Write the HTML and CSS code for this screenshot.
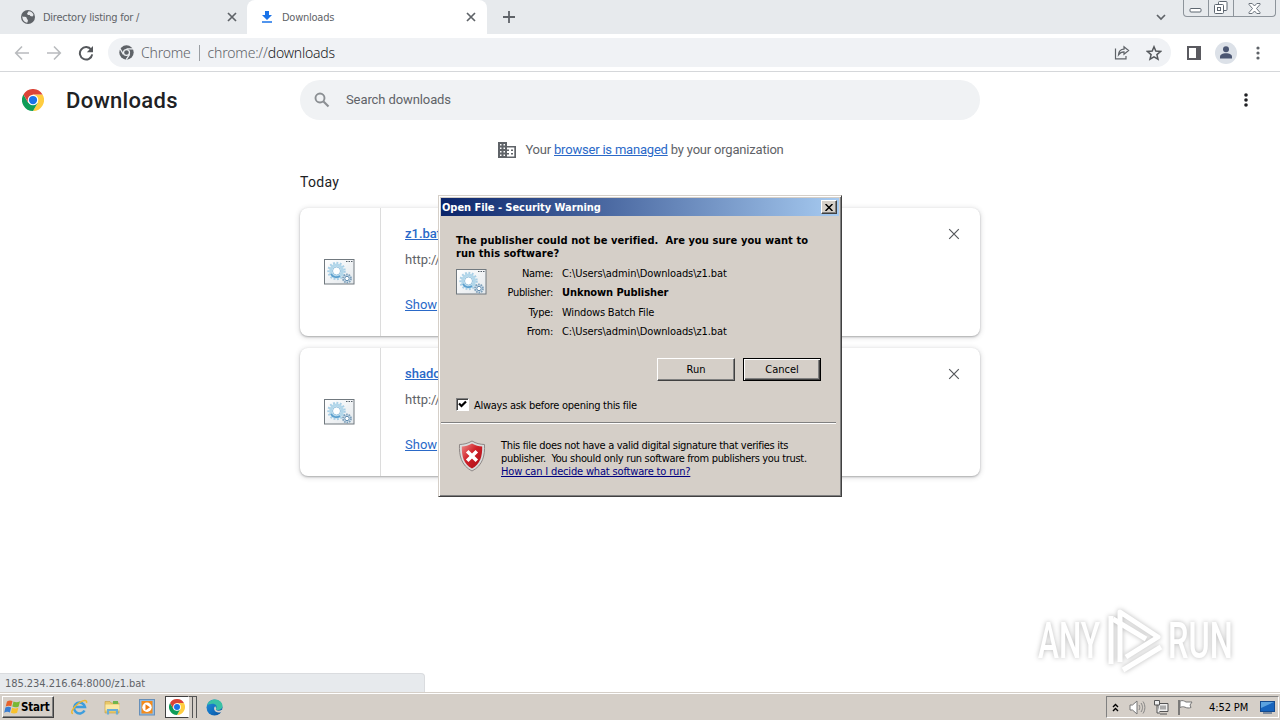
FILE: index.html
```html
<!DOCTYPE html>
<html lang="en">
<head>
    <meta charset="UTF-8">
    <meta name="viewport" content="width=device-width, initial-scale=1.0">
    <title>Downloads</title>
    <link rel="stylesheet" href="styles.css">
</head>
<body>
    <!-- shared icons -->
    <svg class="defs" width="0" height="0">
        <defs>
            <linearGradient id="paper" x1="0" y1="0" x2="1" y2="1">
                <stop offset="0" stop-color="#ffffff"/>
                <stop offset="1" stop-color="#e3e8ec"/>
            </linearGradient>
            <linearGradient id="red" x1="0" y1="0" x2="1" y2="1">
                <stop offset="0" stop-color="#ee8d8b"/>
                <stop offset="0.45" stop-color="#cf2027"/>
                <stop offset="1" stop-color="#a90e18"/>
            </linearGradient>
            <linearGradient id="edge" x1="0" y1="0" x2="1" y2="1">
                <stop offset="0" stop-color="#2a8fd6"/>
                <stop offset="0.5" stop-color="#1273c4"/>
                <stop offset="1" stop-color="#0b4f9c"/>
            </linearGradient>
        </defs>
        <symbol id="chrome" viewBox="0 0 48 48">
            <path fill="#ffcd40" d="M24 12h20.8A24 24 0 0 1 24 48l10.4-18z"/>
            <path fill="#0f9d58" d="M3.2 12A24 24 0 0 0 24 48l10.4-18L24 34.5 13.6 30z"/>
            <path fill="#db4437" d="M3.2 12 13.6 30 24 12h20.8A24 24 0 0 0 3.2 12z"/>
            <circle cx="24" cy="24" r="11.6" fill="#fff"/>
            <circle cx="24" cy="24" r="9" fill="#1a73e8"/>
        </symbol>
        <symbol id="batch" viewBox="0 0 32 26">
            <rect x="0.5" y="0.5" width="29.5" height="24.5" fill="url(#paper)" stroke="#71797f"/>
            <path d="M22 2.5h7" stroke="#56606a" stroke-dasharray="1.5 1"/>
            <circle cx="12.5" cy="12" r="8" fill="none" stroke="#a9cfe6" stroke-width="2.4" stroke-dasharray="1.8 1.6"/>
            <circle cx="12.5" cy="12" r="6" fill="#eaf5fb" stroke="#b3d7ea" stroke-width="2.8"/>
            <path d="M7 15a6.2 6.2 0 0 0 9 2" fill="none" stroke="#5c9fce" stroke-width="1.6"/>
            <circle cx="12.5" cy="12" r="4" fill="#fff" stroke="#7db2d4" stroke-width="0.8"/>
            <circle cx="23" cy="19.5" r="4" fill="#d9e8f2" stroke="#7d9fba" stroke-width="1.8" stroke-dasharray="1.6 0.9"/>
            <circle cx="23" cy="19.5" r="2.2" fill="#fff" stroke="#5f8bb0"/>
        </symbol>
        <symbol id="cross" viewBox="0 0 10 10">
            <path d="M1 1l8 8M9 1l-8 8" fill="none" stroke="currentColor"/>
        </symbol>
    </svg>

    <div class="tabs">
        <div class="tab">
            <svg class="tab-icon" width="16" height="16" viewBox="0 0 16 16">
                <circle cx="8" cy="8" r="7" fill="#5f6368"/>
                <path fill="#e7e9ec" d="M2.3 7.2c1.2 1 2.4.3 3.6.8 1.6.9.5 2 1.6 2.6.8.6.4 2-.3 3.1C4.3 13.5 2.3 10.5 2.3 7.2zM8.5 2.2c2.3-.1 4.5 1.5 5.1 3.8l-1.2 1.4-2.1-.3-.6-1.2-1.7.2-1-1.3z"/>
            </svg>
            <span class="tab-title">Directory listing for /</span>
            <svg class="tab-close" width="10" height="10"><use href="#cross"/></svg>
        </div>
        <div class="tab active">
            <svg class="tab-icon" width="16" height="16" viewBox="0 0 16 16">
                <path fill="#1a73e8" d="M6 2h4v4h3l-5 5-5-5h3zM3 12.3h10v1.5H3z"/>
            </svg>
            <span class="tab-title">Downloads</span>
            <svg class="tab-close" width="10" height="10"><use href="#cross"/></svg>
        </div>
        <svg class="new-tab" width="12" height="12" viewBox="0 0 12 12"><path d="M6 0v12M0 6h12" stroke="#5f6368" stroke-width="1.8"/></svg>
        <svg class="tab-search" width="10" height="7" viewBox="0 0 10 7"><path d="M1 1l4 4 4-4" fill="none" stroke="#5f6368" stroke-width="1.7"/></svg>
        <div class="win-buttons">
            <div class="win-min"><svg width="14" height="5"><rect x="1" y="0.5" width="11" height="3.5" rx="1" fill="#fff" stroke="#5d6670"/></svg></div>
            <div class="win-max"><svg width="14" height="14" viewBox="0 0 14 14"><g fill="#fff" stroke="#5d6670"><rect x="4.5" y="0.5" width="8.5" height="9" rx="1"/><rect x="0.5" y="3.5" width="9" height="9" rx="1"/><rect x="3.5" y="6.5" width="3" height="3"/></g></svg></div>
            <div class="win-close"><svg width="13" height="11" viewBox="0 0 13 11"><path d="M1 .5h3.2L6.5 3 8.8.5H12v1L8.5 5.5 12 9.5v1H8.8L6.5 8 4.2 10.5H1v-1L4.5 5.5 1 1.5z" fill="#fff" stroke="#5d6670" stroke-width=".9"/></svg></div>
        </div>
    </div>

    <div class="toolbar">
        <svg class="nav-icon" width="16" height="16" viewBox="0 0 16 16"><path d="M15 8H2M8 1.5 1.7 8 8 14.5" fill="none" stroke="#b9bbbe" stroke-width="1.6"/></svg>
        <svg class="nav-icon" width="16" height="16" viewBox="0 0 16 16"><path d="M1 8h13M8 1.5 14.3 8 8 14.5" fill="none" stroke="#b9bbbe" stroke-width="1.6"/></svg>
        <svg class="nav-icon" width="16" height="16" viewBox="0 0 16 16"><path d="M13.2 4.8A6.2 6.2 0 1 0 14.2 9.3" fill="none" stroke="#55585c" stroke-width="2"/><path fill="#55585c" d="M15 1v6.2H8.8z"/></svg>
        <div class="omnibox">
            <svg width="15" height="15" viewBox="0 0 48 48">
                <circle cx="24" cy="24" r="23" fill="#5f6368"/>
                <circle cx="24" cy="24" r="9.5" fill="none" stroke="#f0f2f5" stroke-width="4"/>
                <path d="M24 12.500h22M14 29.800 3.500 12M34 29.800 23 47" stroke="#f0f2f5" stroke-width="4"/>
            </svg>
            <span class="scheme">Chrome</span>
            <span class="divider"></span>
            <span class="url">chrome://<b>downloads</b></span>
            <svg class="share" width="16" height="15" viewBox="0 0 16 15"><g fill="none" stroke="#5f6368" stroke-width="1.2"><path d="M1.5 3.5v10.4H12v-3"/><path d="M4.5 9.8c.3-3.5 2.500-5.500 5.500-5.600V1.700L14.600 5.500 10 9.200V6.900c-2.300 0-4 .8-5.500 2.900z"/></g></svg>
            <svg class="star" width="16" height="16" viewBox="0 0 16 16"><path d="M8 1.800l1.800 4.300 4.700.4-3.600 3.100 1.100 4.600L8 11.800l-4 2.400 1.100-4.600L1.500 6.500l4.700-.4z" fill="none" stroke="#55585c" stroke-width="1.5"/></svg>
        </div>
        <svg class="panel" width="14" height="14" viewBox="0 0 14 14"><path fill="#5a5a60" fill-rule="evenodd" d="M0 0h14v14H0zM2 2v10h7V2z"/></svg>
        <div class="avatar"><svg width="12" height="13" viewBox="0 0 12 13"><g fill="#4b5672"><circle cx="6" cy="3.2" r="3"/><path d="M0 12.500V11c0-2.500 2.500-3.700 6-3.700s6 1.200 6 3.700v1.500z"/></g></svg></div>
        <svg class="menu-dots" width="4" height="14" viewBox="0 0 4 14"><g fill="#5f6368"><circle cx="2" cy="2" r="1.6"/><circle cx="2" cy="7" r="1.6"/><circle cx="2" cy="12" r="1.6"/></g></svg>
    </div>

    <div class="header">
        <svg class="logo" width="22" height="22"><use href="#chrome"/></svg>
        <h1>Downloads</h1>
        <div class="search">
            <svg width="16" height="16" viewBox="0 0 16 16"><circle cx="6" cy="6" r="4.5" fill="none" stroke="#8b8f93" stroke-width="1.9"/><path d="M9.5 9.5l5 5" stroke="#8b8f93" stroke-width="2.1"/></svg>
            <span>Search downloads</span>
        </div>
        <svg class="more" width="4" height="14" viewBox="0 0 4 14"><g fill="#202124"><circle cx="2" cy="2" r="1.8"/><circle cx="2" cy="7" r="1.8"/><circle cx="2" cy="12" r="1.8"/></g></svg>
    </div>

    <div class="content">
        <div class="managed">
            <svg width="18" height="16" viewBox="0 0 18 16"><path fill="#5f6368" fill-rule="evenodd" d="M0 0h9v4h9v12H0zM2 2v1.500h1.500V2zm3.500 0v1.500H7V2zM2 5.500V7h1.500V5.500zm3.500 0V7H7V5.500zM2 9v1.500h1.500V9zm3.500 0v1.500H7V9zM2 12.500V14h1.500v-1.500zm3.500 0V14H7v-1.500zM9 5.600v1.900h2v1.500H9v2h2v1.500H9v1.900h7.300V5.600zM13 7.500h2V9h-2zm0 3.500h2v1.500h-2z"/></svg>
            <span>Your <a>browser is managed</a> by your organization</span>
        </div>
        <div class="day">Today</div>
        <div class="card">
            <div class="thumb"><svg width="32" height="26"><use href="#batch"/></svg></div>
            <div class="details">
                <a class="name">z1.bat</a>
                <span class="source">http://</span>
                <a class="show">Show</a>
            </div>
            <svg class="remove" width="12" height="12"><use href="#cross"/></svg>
        </div>
        <div class="card">
            <div class="thumb"><svg width="32" height="26"><use href="#batch"/></svg></div>
            <div class="details">
                <a class="name">shado</a>
                <span class="source">http://</span>
                <a class="show">Show</a>
            </div>
            <svg class="remove" width="12" height="12"><use href="#cross"/></svg>
        </div>
    </div>

    <div class="dialog">
        <div class="title-bar">
            <span>Open File - Security Warning</span>
            <div class="close-btn"><svg width="8" height="7" viewBox="0 0 8 7"><path d="M0.5 0l7 7M7.5 0l-7 7" stroke="#000" stroke-width="1.5"/></svg></div>
        </div>
        <div class="question">The publisher could not be verified.&nbsp; Are you sure you want to<br>run this software?</div>
        <div class="info">
            <svg width="32" height="26"><use href="#batch"/></svg>
            <div class="rows">
                <div class="row"><span class="label">Name:</span><span>C:\Users\admin\Downloads\z1.bat</span></div>
                <div class="row"><span class="label">Publisher:</span><b>Unknown Publisher</b></div>
                <div class="row"><span class="label">Type:</span><span class="type">Windows Batch File</span></div>
                <div class="row"><span class="label">From:</span><span>C:\Users\admin\Downloads\z1.bat</span></div>
            </div>
        </div>
        <div class="buttons">
            <div class="btn">Run</div>
            <div class="btn default">Cancel</div>
        </div>
        <div class="ask">
            <div class="check"><svg width="9" height="9" viewBox="0 0 9 9"><path d="M1 3.5l2.500 2.500L8 1.500" fill="none" stroke="#000" stroke-width="2.2"/></svg></div>
            <span>Always ask before opening this file</span>
        </div>
        <div class="warning">
            <svg width="28" height="32" viewBox="0 0 28 32">
                <path d="M14 1c4 2.500 8 3.300 12.500 3.500C27 15 25 25.500 14 31 3 25.500 1 15 1.500 4.500 6 4.300 10 3.500 14 1z" fill="#d9dcdc" stroke="#8f8886"/>
                <path d="M14 3.500c3.500 2 6.800 2.800 10.200 3C24.400 16 22.500 24 14 28.500 5.500 24 3.600 16 3.800 6.500c3.400-.2 6.700-1 10.200-3z" fill="url(#red)"/>
                <path d="M9.200 11.200l9.600 9.600M18.800 11.200l-9.600 9.600" stroke="#fff" stroke-width="3.600"/>
            </svg>
            <div class="warning-text">
                <span>This file does not have a valid digital signature that verifies its</span>
                <span>publisher.&nbsp; You should only run software from publishers you trust.</span>
                <a>How can I decide what software to run?</a>
            </div>
        </div>
    </div>

    <svg class="watermark" width="240" height="76" viewBox="0 0 240 76">
        <g font-family="Roboto" font-size="50" font-weight="500" fill="#fff">
            <text transform="translate(8 53) scale(0.63 1)">ANY</text>
            <text transform="translate(138 53) scale(0.65 1)">RUN</text>
        </g>
        <g fill="none" stroke="#fff" stroke-width="5" stroke-linejoin="round">
            <path d="M81 11v48M90 57V7l38 25L96 52"/>
            <path d="M93 65l38-23"/>
            <path d="M83 14l33 20"/>
        </g>
    </svg>

    <div class="status">185.234.216.64:8000/z1.bat</div>

    <div class="taskbar">
        <div class="start">
            <svg width="17" height="16" viewBox="0 0 17 16">
                <path fill="#e8632c" d="M3 2.500C5 1 7 1.200 8.500 2L7.300 7.200C5.500 6.300 3.500 6.500 1.700 7.500z"/>
                <path fill="#78b833" d="M9.500 2.500c2 1 4.500 1 6.500-.3l-1.300 5.200c-2 1.200-4.300 1.200-6.400.2z"/>
                <path fill="#3a7ed2" d="M1.400 8.600c2-1.200 4-1.100 5.700-.2l-1.200 5C4 12.500 2 12.700.2 13.700z"/>
                <path fill="#f8c12c" d="M8.100 8.800c2 1 4.400 1 6.300-.2l-1.300 5.200c-2 1.100-4.200 1-6.200 0z"/>
            </svg>
            <span>Start</span>
        </div>
        <svg class="ie" width="18" height="18" viewBox="0 0 18 18">
            <path d="M14.500 12.500A5.500 5.500 0 1 1 15 9H4.500" fill="none" stroke="#3d9ddd" stroke-width="2.500"/>
            <path d="M3 15.500C-.5 15 4 8.500 9 5c4.500-3.200 8.500-3.500 7.500 0" fill="none" stroke="#efb82f" stroke-width="1.500"/>
        </svg>
        <svg class="folder" width="17" height="17" viewBox="0 0 17 17">
            <path fill="#e8c869" stroke="#c59d42" stroke-width=".6" d="M1 2.500h5l1 1.500h8v10H1z"/>
            <path fill="#6fb54c" d="M9 2h5v3H9z"/><path fill="#fbe9a4" d="M1.500 5.500h14v6h-14z"/>
            <path fill="none" stroke="#69add6" stroke-width="2.200" d="M4 15.500V11h9v4.500"/>
        </svg>
        <svg class="player" width="16" height="17" viewBox="0 0 16 17">
            <rect x="0.5" y="0.5" width="15" height="15.5" fill="#8dbbe5" stroke="#668fb9"/>
            <rect x="2.5" y="2" width="11" height="12.5" fill="#f38b1c"/><circle cx="8" cy="8.300" r="4.700" fill="#fff"/><path fill="#ed7b12" d="M6.500 5.300l4.500 3-4.500 3z"/>
        </svg>
        <div class="task-group">
            <div class="task-active"><svg width="16" height="16"><use href="#chrome"/></svg></div>
            <span class="stack"></span><span class="stack"></span>
        </div>
        <svg class="edge" width="17" height="17" viewBox="0 0 17 17">
            <circle cx="8.500" cy="8.500" r="8" fill="url(#edge)"/>
            <path fill="#39c1a5" d="M1 6.500C2.500 2 6 .5 9 .5c4.500 0 7.500 3.200 7.500 6.500 0 2.500-2 4-4.500 4-2 0-2.500-.8-1.800-1.800C11.500 7 9.500 4.800 6.500 4.800 4 4.800 2 5.700 1 6.500z"/>
            <path fill="#d7d1ca" d="M10.200 9.200c-1 1.300.2 2.500 2.300 2.500 1.300 0 2.500-.4 3.400-1l.6 1.300c-2 2.300-7.500 2.200-8.300-1.500-.3-1.300.1-2.600 1.100-3.200z"/>
        </svg>
        <div class="tray">
            <svg width="7" height="9" viewBox="0 0 7 9"><path d="M1 4l2.500-2.500L6 4M1 8l2.500-2.500L6 8" fill="none" stroke="#000" stroke-width="1.400"/></svg>
            <svg class="sound" width="17" height="15" viewBox="0 0 17 15"><path d="M1 5h2.500L8 1v13L3.500 10H1z" fill="#fff" stroke="#777"/><path d="M10 5c1 1.500 1 3.500 0 5M12 3c2 3 2 6 0 9M14 1.500c2.500 3.500 2.500 8.500 0 12" fill="none" stroke="#858585"/></svg>
            <svg class="network" width="16" height="16" viewBox="0 0 16 16"><g fill="#eee" stroke="#555"><path d="M5 4.500h10v8H5zM7 15h7"/><path d="M1.500 1.500h5V6h-5zM4 6v8h3"/></g><path d="M7 6.500h6v4H7z" fill="#aaa"/></svg>
            <svg class="flag" width="17" height="16" viewBox="0 0 17 16"><path d="M2 1v15" stroke="#666" stroke-width="1.600"/><path d="M3 2c3-1 4 0 6 1h6l-2 3 1 2.500c-2 .8-4 .6-6-.3-2-.8-3.500-.4-5 .3z" fill="#fff" stroke="#777"/></svg>
            <span class="clock">4:52 PM</span>
            <svg class="desktop" width="15" height="13" viewBox="0 0 15 13"><rect x="0.500" y="0.500" width="14" height="10" fill="#1764bd" stroke="#144a8e"/><path fill="#5ba2df" d="M1 1h13L1 7z"/><path stroke="#284a77" d="M3 12h9"/></svg>
        </div>
    </div>
</body>
</html>
```
FILE: styles.css
```css
* {
    box-sizing: border-box;
}

body {
    position: relative;
    width: 1280px;
    height: 720px;
    margin: 0;
    overflow: hidden;
    display: flex;
    flex-direction: column;
    background-color: #fff;
    font-family: "DejaVu Sans Condensed", "DejaVu Sans", sans-serif;
    font-size: 11px;
    white-space: nowrap;
}

svg {
    display: block;
    flex: none;
}

.defs {
    position: absolute;
}

/* Tab strip */
.tabs {
    height: 34px;
    flex: none;
    display: flex;
    align-items: flex-start;
    background-color: #e7eaed;
    color: #5f6368;
    font-size: 11px;
    letter-spacing: -0.25px;
}

.tab {
    width: 247px;
    height: 34px;
    padding: 0 10px 0 20px;
    display: flex;
    align-items: center;
}

.tab.active {
    width: 240px;
    padding: 0 11px 0 12px;
    background-color: #fff;
    border-radius: 8px 8px 0 0;
}

.tab-title {
    flex: 1;
    margin-left: 7px;
}

.tab-close {
    stroke-width: 1.7;
    color: #5f6368;
}

.new-tab {
    margin: 11px 0 0 16px;
}

.tab-search {
    margin: 14px 17px 0 auto;
}

.win-buttons {
    width: 93px;
    height: 17px;
    margin-right: 4px;
    display: flex;
    border: 1px solid #8d949b;
    border-top: none;
    border-radius: 0 0 4px 4px;
}

.win-min,
.win-max,
.win-close {
    display: flex;
    justify-content: center;
    align-items: center;
}

.win-min {
    width: 25px;
    padding-top: 4px;
    border-right: 1px solid #8d949b;
}

.win-max {
    width: 25px;
    border-right: 1px solid #8d949b;
}

.win-close {
    flex: 1;
}

/* Toolbar */
.toolbar {
    height: 38px;
    flex: none;
    display: flex;
    align-items: center;
    padding-left: 14px;
    border-bottom: 1px solid #d5d7da;
}

.nav-icon {
    margin-right: 16px;
}

.omnibox {
    width: 1063px;
    height: 29px;
    margin-left: -2px;
    padding-left: 11px;
    display: flex;
    align-items: center;
    border-radius: 15px;
    background-color: #f0f2f5;
    font-family: "Noto Sans", sans-serif;
    font-size: 14px;
    font-weight: 300;
    letter-spacing: -0.2px;
    color: #5f6368;
}

.scheme {
    margin-left: 7px;
}

.divider {
    width: 1px;
    height: 16px;
    margin: 0 8px;
    background-color: #9a9ea3;
}

.url b {
    font-weight: 300;
    color: #202124;
}

.share {
    margin-left: auto;
}

.star {
    margin: 0 9px 0 16px;
}

.panel {
    margin-left: 16px;
}

.avatar {
    width: 22px;
    height: 22px;
    margin-left: 14px;
    display: flex;
    justify-content: center;
    align-items: center;
    border-radius: 50%;
    background-color: #dce1e8;
}

.menu-dots {
    margin-left: 19px;
}

/* Downloads page */
.header {
    height: 56px;
    flex: none;
    display: flex;
    align-items: center;
    padding: 0 32px 0 22px;
}

h1 {
    width: 234px;
    margin: 0 0 0 22px;
    font-family: Roboto, sans-serif;
    font-size: 22px;
    font-weight: 500;
    letter-spacing: 0.3px;
    color: #202124;
}

.search {
    width: 680px;
    height: 40px;
    display: flex;
    align-items: center;
    padding-left: 14px;
    border-radius: 20px;
    background-color: #f0f2f4;
    font-family: Roboto, sans-serif;
    font-size: 13px;
    letter-spacing: -0.1px;
    color: #5f6368;
}

.search span {
    margin: 0 0 2px 16px;
}

.more {
    margin-left: auto;
}

.content {
    width: 680px;
    margin: 0 auto;
    font-family: Roboto, sans-serif;
    font-size: 13px;
    color: #5f6368;
}

.managed {
    height: 44px;
    padding-left: 2px;
    display: flex;
    justify-content: center;
    align-items: center;
    gap: 9px;
    letter-spacing: -0.2px;
}

.managed span {
    margin-bottom: 2px;
}

.content a {
    color: #2a69c8;
    text-decoration: underline;
}

.day {
    height: 36px;
    line-height: 21px;
    font-size: 14px;
    letter-spacing: 0.3px;
    color: #202124;
}

.card {
    height: 128px;
    margin-bottom: 12px;
    padding-right: 20px;
    display: flex;
    border-radius: 8px;
    background-color: #fff;
    box-shadow: 0 1px 2px rgba(60, 64, 67, 0.35), 0 1px 5px 1px rgba(60, 64, 67, 0.16);
}

.thumb {
    width: 81px;
    display: flex;
    justify-content: center;
    align-items: center;
    border-right: 1px solid #dcdcdc;
}

.details {
    flex: 1;
    padding: 16px 24px;
    display: flex;
    flex-direction: column;
    line-height: 20px;
}

.name {
    font-weight: 500;
}

.source {
    margin: 6px 0 25px;
}

.remove {
    margin-top: 20px;
    color: #55585c;
}

/* Security dialog */
.dialog {
    position: absolute;
    left: 438px;
    top: 195px;
    width: 404px;
    height: 302px;
    padding: 2px 1px;
    display: flex;
    flex-direction: column;
    background-color: #d5cfc8;
    border: 1px solid #d5cfc8;
    border-right-color: #404040;
    border-bottom-color: #404040;
    box-shadow: inset 1px 1px #fff, inset -1px -1px #808080;
    color: #000;
}

.title-bar {
    height: 18px;
    margin: 0 1px;
    padding: 0 2px 0 1px;
    display: flex;
    align-items: center;
    justify-content: space-between;
    background: linear-gradient(to right, #0a246a, #a6caf0);
    color: #fff;
    font-weight: bold;
    letter-spacing: -0.05px;
}

.close-btn {
    width: 16px;
    height: 14px;
    display: flex;
    align-items: center;
    justify-content: center;
    background-color: #d5cfc8;
    border: 1px solid #fff;
    border-right-color: #404040;
    border-bottom-color: #404040;
    box-shadow: inset -1px -1px #808080;
}

.question {
    margin: 18px 0 0 16px;
    font-weight: bold;
    line-height: 13px;
    letter-spacing: 0.08px;
}

.info {
    display: flex;
    margin: 3px 0 0 16px;
}

.info > svg {
    margin-top: 6px;
}

.rows {
    padding-top: 1px;
    line-height: 19.4px;
    letter-spacing: -0.09px;
}

.row {
    display: flex;
}

.label {
    width: 65px;
    margin-right: 9px;
    text-align: right;
    letter-spacing: -0.3px;
}

.type {
    letter-spacing: -0.18px;
}

.buttons {
    display: flex;
    gap: 8px;
    margin: 16px 0 0 217px;
}

.btn {
    width: 78px;
    height: 23px;
    line-height: 21px;
    text-align: center;
    border: 1px solid #fff;
    border-right-color: #404040;
    border-bottom-color: #404040;
    box-shadow: inset -1px -1px #808080;
}

.btn.default {
    border-color: #000;
    box-shadow: inset 1px 1px #fff, inset -1px -1px #404040, inset -2px -2px #808080;
}

.ask {
    height: 42px;
    margin: 0 4px 0 1px;
    padding: 7px 0 0 15px;
    display: flex;
    align-items: flex-start;
    border-bottom: 1px solid #808080;
    box-shadow: 0 1px #fff;
    letter-spacing: -0.27px;
}

.check {
    width: 13px;
    height: 13px;
    margin: 10px 5px 0 0;
    padding: 1px;
    background-color: #fff;
    border: 1px solid #808080;
    border-right-color: #fff;
    border-bottom-color: #fff;
    box-shadow: inset 1px 1px #404040;
}

.ask span {
    margin-top: 11px;
    line-height: 13px;
}

.warning {
    display: flex;
    margin: 17px 0 0 18px;
}

.warning-text {
    display: flex;
    flex-direction: column;
    align-items: flex-start;
    margin: -1px 0 0 15px;
    line-height: 13px;
    letter-spacing: -0.33px;
}

.warning-text a {
    color: #00007f;
    text-decoration: underline;
    letter-spacing: -0.17px;
}

/* Watermark over the page */
.watermark {
    position: absolute;
    left: 1030px;
    top: 605px;
    filter: drop-shadow(0 0 2.5px rgba(0, 0, 0, 0.28));
}

/* Link target bubble */
.status {
    position: absolute;
    left: 0;
    top: 673px;
    width: 425px;
    height: 19px;
    padding-left: 5px;
    line-height: 19px;
    background-color: #e7eaed;
    border: 1px solid #dadcdf;
    border-width: 1px 1px 0 0;
    border-radius: 0 4px 0 0;
    letter-spacing: -0.05px;
    color: #5f6368;
}

/* Taskbar */
.taskbar {
    height: 28px;
    margin-top: auto;
    padding: 1px 1px 0 2px;
    flex: none;
    display: flex;
    align-items: center;
    background-color: #d5cfc8;
    border-top: 1px solid #d5cfc8;
    box-shadow: inset 0 1px #fff;
}

.start {
    width: 52px;
    height: 22px;
    padding-left: 1px;
    display: flex;
    align-items: center;
    border: 1px solid #fff;
    border-right-color: #404040;
    border-bottom-color: #404040;
    box-shadow: inset -1px -1px #808080;
    font-size: 11.5px;
    font-weight: bold;
    letter-spacing: -0.2px;
}

.ie {
    margin-left: 16px;
}

.folder {
    margin-left: 16px;
}

.player {
    margin-left: 18px;
}

.task-group {
    height: 22px;
    margin-left: 10px;
    display: flex;
}

.task-active {
    width: 24px;
    display: flex;
    align-items: center;
    justify-content: center;
    background-color: #fff;
    border: 1px solid #404040;
    border-right-color: #fff;
}

.stack {
    width: 4px;
    border-right: 1px solid #555;
    border-top: 1px solid #555;
}

.edge {
    margin-left: 9px;
}

.tray {
    width: 173px;
    height: 22px;
    margin-left: auto;
    padding-left: 5px;
    display: flex;
    align-items: center;
    border: 1px solid #808080;
    border-right-color: #fff;
    border-bottom-color: #fff;
}

.sound {
    margin-left: 10px;
}

.network {
    margin-left: 7px;
}

.flag {
    margin-left: 8px;
}

.clock {
    margin-left: 15px;
    letter-spacing: -0.1px;
}

.desktop {
    margin: 1px 3px 0 auto;
}
```
